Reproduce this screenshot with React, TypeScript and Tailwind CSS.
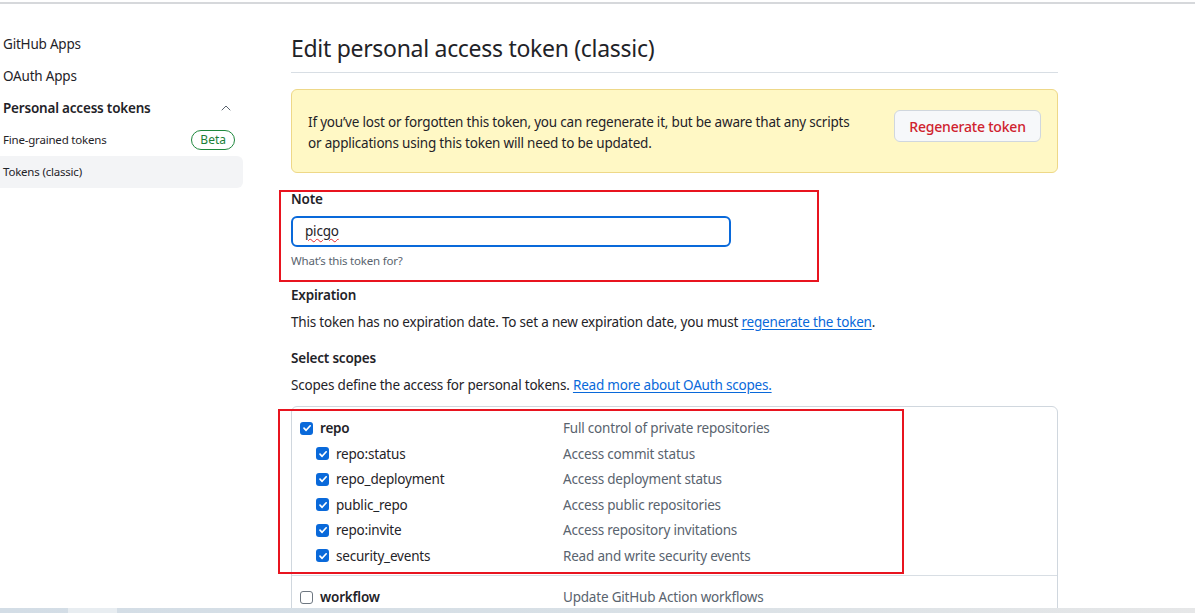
import { ChevronUp } from 'lucide-react';

const subScopes = [
  { name: 'repo:status', desc: 'Access commit status' },
  { name: 'repo_deployment', desc: 'Access deployment status' },
  { name: 'public_repo', desc: 'Access public repositories' },
  { name: 'repo:invite', desc: 'Access repository invitations' },
  { name: 'security_events', desc: 'Read and write security events' },
];

function Checkbox({ checked }: { checked: boolean }) {
  if (!checked) {
    return <span className="block w-[13px] h-[13px] rounded-[3px] border border-[#6e7781] bg-white" />;
  }
  return (
    <span className="flex items-center justify-center w-[13px] h-[13px] rounded-[3px] bg-[#0969da]">
      <svg width="10" height="10" viewBox="0 0 10 10" fill="none">
        <path d="M2 5.2 L4.1 7.3 L8.2 2.8" stroke="white" strokeWidth="1.7" strokeLinecap="round" strokeLinejoin="round" />
      </svg>
    </span>
  );
}

export default function App() {
  return (
    <div className="relative w-full h-[613px] overflow-hidden bg-white text-[#1f2328] text-[13.5px] tracking-[-0.2px] font-['Segoe_UI','Noto_Sans',sans-serif]">
      <div className="mt-[2px] h-[2px] bg-[#d6d8db]" />

      <div className="flex">
        {/* Sidebar */}
        <div className="w-[243px] pt-[24px] shrink-0">
          <div className="h-8 flex items-center pl-[3px]">GitHub Apps</div>
          <div className="h-8 flex items-center pl-[3px]">OAuth Apps</div>
          <div className="h-8 flex items-center justify-between pl-[3px] pr-[9px] font-semibold">
            Personal access tokens
            <ChevronUp className="w-4 h-4 text-[#59636e]" strokeWidth={1.5} />
          </div>
          <div className="h-8 flex items-center justify-between pl-[3px] pr-[8px] text-[11.5px]">
            Fine-grained tokens
            <span className="border border-[#1f883d] text-[#1a7f37] rounded-full px-[8px] h-[20px] flex items-center text-[12px] tracking-normal">Beta</span>
          </div>
          <div className="h-8 flex items-center pl-[3px] text-[11.5px] bg-[#f3f4f6] rounded-r-md">Tokens (classic)</div>
        </div>

        {/* Main */}
        <div className="ml-[48px] w-[767px]">
          <div className="mt-[26px] pb-[6px] border-b border-[#d8dee4]">
            <h1 className="text-[23px] tracking-[-0.3px] leading-9 font-normal">Edit personal access token (classic)</h1>
          </div>

          <div className="mt-[16px] flex items-start justify-between bg-[#fff8c5] border border-[#eed888] rounded-md pl-[16px] pr-[16px] pt-[22px] pb-[18px]">
            <p className="w-[550px] leading-[21px]">
              If you’ve lost or forgotten this token, you can regenerate it, but be aware that any scripts or applications using this token will need to be updated.
            </p>
            <button className="-mt-[2px] h-[32px] w-[147px] rounded-md border border-[#d0d7de] bg-[#f6f8fa] text-[#cf222e] font-medium text-[14px]">
              Regenerate token
            </button>
          </div>

          <div className="mt-[16px]">
            <div className="font-semibold leading-[21px]">Note</div>
            <div className="mt-[6px] w-[440px] h-[31px] border-2 border-[#0969da] rounded-md flex items-center pl-[12px]">
              <span className="underline decoration-wavy decoration-[#e5262c] decoration-1 underline-offset-2">picgo</span>
            </div>
            <div className="mt-[5px] text-[11.5px] leading-[18px] text-[#59636e]">What’s this token for?</div>
          </div>

          <div className="mt-[15px]">
            <div className="font-semibold leading-[21px]">Expiration</div>
            <p className="mt-[6px] leading-[21px]">
              This token has no expiration date. To set a new expiration date, you must{' '}
              <a className="text-[#0969da] underline underline-offset-2">regenerate the token</a>.
            </p>
          </div>

          <div className="mt-[15px]">
            <div className="font-semibold leading-[21px]">Select scopes</div>
            <p className="mt-[6px] leading-[21px]">
              Scopes define the access for personal tokens.{' '}
              <a className="text-[#0969da] underline underline-offset-2">Read more about OAuth scopes.</a>
            </p>
          </div>

          <div className="mt-[10px] border border-[#d0d7de] rounded-t-md h-[300px]">
            <div className="pt-[8px] pb-[6px] border-b border-[#d8dee4]">
              <div className="h-[26px] flex items-center pl-[8px]">
                <div className="w-[263px] flex items-center gap-[7px]">
                  <Checkbox checked />
                  <span className="font-semibold">repo</span>
                </div>
                <span className="text-[#59636e]">Full control of private repositories</span>
              </div>
              {subScopes.map((s) => (
                <div key={s.name} className="h-[25.5px] flex items-center pl-[24px]">
                  <div className="w-[247px] flex items-center gap-[7px]">
                    <Checkbox checked />
                    <span>{s.name}</span>
                  </div>
                  <span className="text-[#59636e]">{s.desc}</span>
                </div>
              ))}
            </div>
            <div className="pt-[9px] h-[26px] flex items-center pl-[8px] box-content">
              <div className="w-[263px] flex items-center gap-[7px]">
                <Checkbox checked={false} />
                <span className="font-semibold">workflow</span>
              </div>
              <span className="text-[#59636e]">Update GitHub Action workflows</span>
            </div>
          </div>
        </div>
      </div>

      {/* annotation boxes */}
      <div className="absolute left-[279px] top-[190px] w-[540px] h-[92px] border-2 border-[#e8141f]" />
      <div className="absolute left-[278px] top-[409px] w-[626px] h-[165px] border-2 border-[#e8141f]" />

      {/* bottom strip */}
      <div className="absolute left-0 right-0 bottom-0 h-[5px] bg-gradient-to-r from-[#d3dde6] via-[#d8e0e6] to-[#e6e7e8]" />
      <div className="absolute left-[68px] w-[49px] bottom-0 h-[5px] bg-[#e8edf1]" />
    </div>
  );
}
